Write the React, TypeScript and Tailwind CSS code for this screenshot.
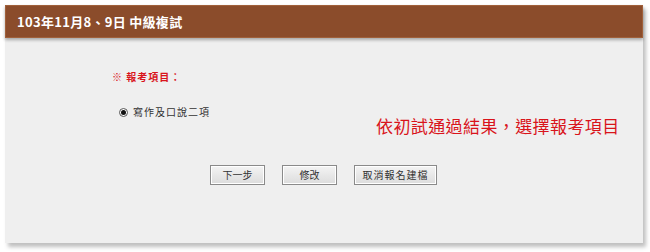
import React from "react";

export default function App() {
  const cjk = { fontFamily: '"Noto Sans CJK TC", "Noto Sans CJK SC", sans-serif' };
  const btn =
    "h-[20px] border border-[#8a8a8a] bg-gradient-to-b from-[#f4f4f4] to-[#dcdcdc] text-[10px] text-[#333] leading-none shadow-[inset_0_0_0_1px_#fff] flex items-center justify-center";
  return (
    <div className="w-[650px] h-[252px] bg-white pt-[5px] pl-[5px]" style={cjk}>
      <div className="w-[638px] h-[238px] bg-[#efefef] shadow-[3px_4px_4px_rgba(0,0,0,0.25)] flex flex-col">
        <div className="h-[33px] bg-[#8b4c2b] border border-[#a0603a] shadow-[0_2px_3px_rgba(0,0,0,0.3)] flex items-center pl-[11px]">
          <span className="text-white font-bold text-[13px] tracking-[0.3px]">103年11月8、9日 中級複試</span>
        </div>
        <div className="pl-[107px] pt-[34px] text-[10px] font-bold text-[#d9141b] tracking-[1px] leading-none">
          ※ 報考項目：
        </div>
        <div className="flex items-center pl-[114px] pt-[25px] gap-[5px] text-[10px] text-[#333] tracking-[1px] leading-none">
          <span className="w-[9px] h-[9px] rounded-full border border-[#555] bg-white flex items-center justify-center">
            <span className="w-[5px] h-[5px] rounded-full bg-[#111]" />
          </span>
          <span>寫作及口說二項</span>
        </div>
        <div className="pl-[371px] pt-[0px] text-[17px] text-[#d9141b] leading-none tracking-[0.4px]">
          依初試通過結果，選擇報考項目
        </div>
        <div className="flex pl-[205px] pt-[31px] gap-[17px]">
          <button className={`${btn} w-[55px]`}>下一步</button>
          <button className={`${btn} w-[55px]`}>修改</button>
          <button className={`${btn} w-[83px] tracking-[1px]`}>取消報名建檔</button>
        </div>
      </div>
    </div>
  );
}
